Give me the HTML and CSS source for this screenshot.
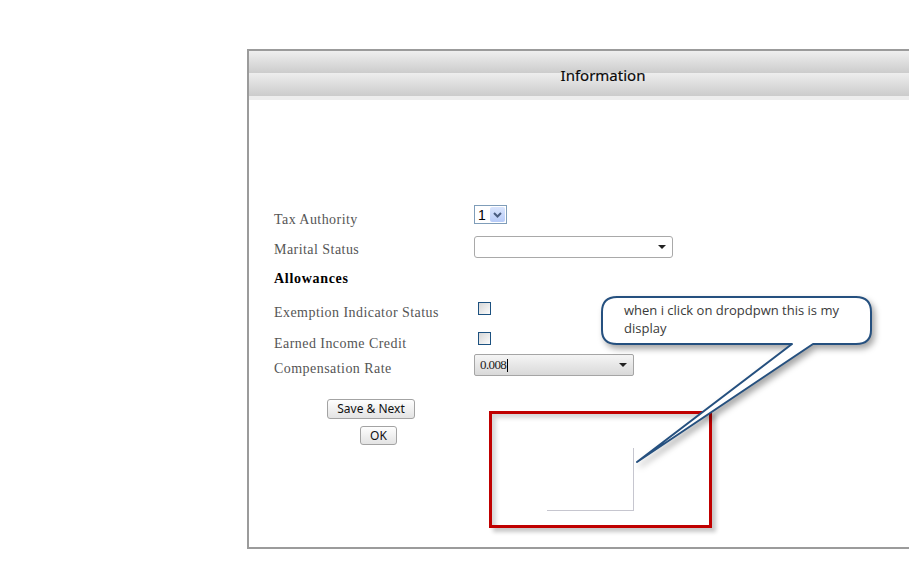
FILE: index.html
```html
<!DOCTYPE html>
<html lang="en">
<head>
<meta charset="utf-8">
<title>Information</title>
<link rel="stylesheet" href="styles.css">
</head>
<body>
<div class="page">
  <section class="panel">
    <header class="panel-head">
      <h1 class="panel-title">Information</h1>
    </header>
    <form class="panel-body">
      <div class="row row-tax">
        <label class="field-label">Tax Authority</label>
        <div class="combo combo-tax">
          <span class="combo-value">1</span>
          <span class="combo-btn">
            <svg width="13" height="13" viewBox="0 0 13 13"><path d="M3 5 L6.5 8.5 L10 5" fill="none" stroke="#4a5d80" stroke-width="2"/></svg>
          </span>
        </div>
      </div>
      <div class="row row-marital">
        <label class="field-label">Marital Status</label>
        <div class="combo combo-marital"><span class="caret"></span></div>
      </div>
      <div class="row row-section">
        <h2 class="section-title">Allowances</h2>
      </div>
      <div class="row row-exempt">
        <label class="field-label">Exemption Indicator Status</label>
        <span class="check"></span>
      </div>
      <div class="row row-earned">
        <label class="field-label">Earned Income Credit</label>
        <span class="check"></span>
      </div>
      <div class="row row-rate">
        <label class="field-label">Compensation Rate</label>
        <div class="combo combo-rate">
          <span class="rate-value">0.008</span><span class="text-cursor"></span>
          <span class="caret"></span>
        </div>
      </div>
      <div class="actions">
        <button type="button" class="btn btn-save">Save &amp; Next</button>
        <button type="button" class="btn btn-ok">OK</button>
      </div>
    </form>
  </section>

  <!-- open dropdown list, outlined in red -->
  <div class="dropdown-frame">
    <div class="dropdown-list"></div>
  </div>

  <!-- speech bubble note -->
  <svg class="callout-shape" width="909" height="577" viewBox="0 0 909 577">
    <path d="M617 297 H856 Q871 297 871 312 V330 Q871 344 856 344 H813 L637 462 L792 344 H617 Q602 344 602 330 V312 Q602 297 617 297 Z"
          fill="#ffffff" stroke="#25507f" stroke-width="2" stroke-linejoin="round"/>
  </svg>
  <p class="callout-text">when i click on dropdpwn this is my display</p>
</div>
</body>
</html>
```

FILE: styles.css
```css
html, body {
  margin: 0;
  padding: 0;
  background: #ffffff;
  overflow: hidden;
}

.page {
  position: relative;
  width: 909px;
  height: 577px;
  padding: 49px 0 0 247px;
  box-sizing: border-box;
}

/* main panel: its right side continues past the window edge */
.panel {
  width: 662px;
  height: 500px;
  border: 2px solid #9b9b9b;
  border-right: none;
  box-sizing: border-box;
  background: #ffffff;
}

.panel-head {
  height: 49px;
  padding-left: 48px;
  box-sizing: border-box;
  background: linear-gradient(to bottom,
    #efefef 0px, #cccccc 22px,
    #eeeeee 22px, #cbcbcb 45px,
    #ededed 45px, #ededed 49px);
  display: flex;
  align-items: center;
  justify-content: center;
}

.panel-title {
  margin: 0;
  font-family: "Noto Sans", "DejaVu Sans", sans-serif;
  font-size: 15px;
  font-weight: 400;
  line-height: 1;
  color: #0a0a0a;
  -webkit-text-stroke: 0.2px #0a0a0a;
}

.panel-body {
  padding: 105px 0 0 25px;
  margin: 0;
}

/* form rows */
.row {
  display: flex;
  align-items: flex-start;
}

.field-label {
  width: 200px;
  flex: none;
  font-family: "Liberation Serif", "Times New Roman", serif;
  font-size: 14px;
  line-height: 18px;
  letter-spacing: 0.45px;
  color: #555555;
}

.row-tax { height: 31px; }
.row-tax .field-label { margin-top: 6px; }

.row-marital { height: 30px; }
.row-marital .field-label { margin-top: 5px; }

.row-section { height: 29px; }
.section-title {
  margin: 4px 0 0;
  font-family: "Liberation Serif", "Times New Roman", serif;
  font-size: 14px;
  font-weight: 700;
  line-height: 18px;
  letter-spacing: 0.7px;
  color: #000000;
}

.row-exempt { height: 30px; }
.row-exempt .field-label { margin-top: 9px; }
.row-exempt .check { margin-top: 7px; }

.row-earned { height: 28px; }
.row-earned .field-label { margin-top: 10px; }
.row-earned .check { margin-top: 7px; }

.row-rate { height: 27px; }
.row-rate .field-label { margin-top: 7px; }
.row-rate .combo-rate { margin-top: 1px; }

/* select-like boxes */
.combo {
  box-sizing: border-box;
  display: flex;
  align-items: center;
}

.combo-tax {
  width: 33px;
  height: 19px;
  border: 1px solid #7f9db9;
  background: #ffffff;
  padding: 0 1px 0 3px;
  justify-content: space-between;
}

.combo-value {
  font-family: "Liberation Sans", Arial, sans-serif;
  font-size: 14px;
  line-height: 16px;
  color: #000000;
}

.combo-btn {
  width: 15px;
  height: 15px;
  border-radius: 2px;
  background: linear-gradient(to bottom, #dae5fd, #b7cbf8);
  display: flex;
  align-items: center;
  justify-content: center;
}

.combo-btn svg { display: block; }

.combo-marital {
  width: 199px;
  height: 22px;
  border: 1px solid #a9a9a9;
  border-radius: 3px;
  background: #ffffff;
  justify-content: flex-end;
  padding-right: 6px;
}

.combo-rate {
  width: 160px;
  height: 22px;
  border: 1px solid #a5a5a5;
  border-radius: 2px;
  background: linear-gradient(to bottom, #f5f5f5, #d9d9d9);
  padding: 0 6px 0 5px;
}

.rate-value {
  font-family: "Liberation Serif", "Times New Roman", serif;
  font-size: 13px;
  line-height: 14px;
  letter-spacing: -0.6px;
  color: #222222;
}

.text-cursor {
  width: 1px;
  height: 13px;
  margin-left: 1px;
  background: #000000;
}

.caret {
  width: 0;
  height: 0;
  margin-left: auto;
  border-left: 4px solid transparent;
  border-right: 4px solid transparent;
  border-top: 4px solid #222222;
}

.check {
  width: 13px;
  height: 13px;
  margin-left: 4px;
  box-sizing: border-box;
  border: 1px solid #1c5180;
  background: linear-gradient(135deg, #d6d6d6, #fbfbfb);
}

/* buttons */
.actions {
  display: flex;
  flex-direction: column;
  align-items: flex-start;
  padding-top: 19px;
}

.btn {
  box-sizing: border-box;
  margin: 0;
  padding: 0;
  border: 1px solid #a3a3a3;
  border-radius: 3px;
  background: linear-gradient(to bottom, #fefefe, #e3e3e3);
  font-family: "Noto Sans", "Liberation Sans", sans-serif;
  font-size: 12px;
  line-height: 16px;
  color: #111111;
}

.btn-save {
  width: 88px;
  height: 20px;
  margin-left: 53px;
}

.btn-ok {
  width: 37px;
  height: 19px;
  margin-left: 86px;
  margin-top: 7px;
}

/* red outline around the open dropdown */
.dropdown-frame {
  position: absolute;
  left: 489px;
  top: 411px;
  width: 223px;
  height: 117px;
  box-sizing: border-box;
  border: 3px solid #c00000;
  box-shadow: 4px 4px 4px rgba(0, 0, 0, 0.22), inset 4px 4px 4px rgba(0, 0, 0, 0.16);
}

.dropdown-list {
  position: absolute;
  left: 55px;
  top: 34px;
  width: 87px;
  height: 63px;
  box-sizing: border-box;
  border-right: 1px solid #c6c6cf;
  border-bottom: 1px solid #c6c6cf;
}

/* callout bubble */
.callout-shape {
  position: absolute;
  left: 0;
  top: 0;
  filter: drop-shadow(3px 4px 3px rgba(0, 0, 0, 0.35));
}

.callout-text {
  position: absolute;
  left: 624px;
  top: 302px;
  width: 236px;
  margin: 0;
  font-family: "Open Sans", "Noto Sans", sans-serif;
  font-size: 13px;
  line-height: 17.5px;
  color: #3a3a3a;
}
```
